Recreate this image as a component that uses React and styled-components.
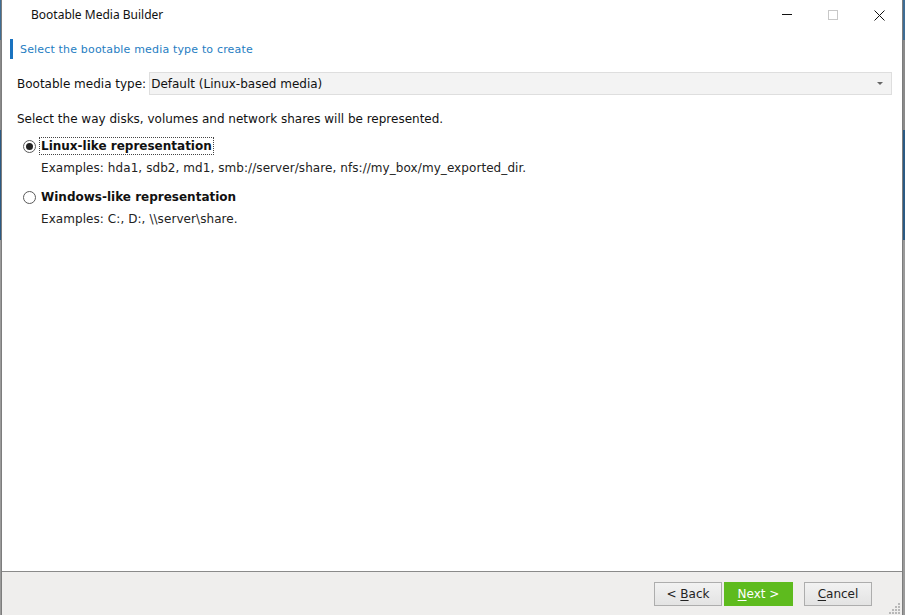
import styled, { createGlobalStyle } from "styled-components";

const Global = createGlobalStyle`
  html, body { margin: 0; padding: 0; height: 100%; }
  body {
    background: #5b6c7c;
    font-family: "DejaVu Sans", sans-serif;
    overflow: hidden;
  }
  #root { height: 100%; }
`;

const Desktop = styled.div`
  height: 615px;
  width: 905px;
  display: flex;
  background: linear-gradient(#3f6d95 0 40px, #8a8a8a 40px 130px, #2b5a84 130px 240px, #9a9a9a 240px);
`;

const Window = styled.div`
  margin-left: 1px;
  width: 900px;
  height: 615px;
  display: flex;
  flex-direction: column;
  background: #fff;
  border-left: 1px solid #7d7d7d;
  border-right: 1px solid #7d7d7d;
`;

const TitleBar = styled.div`
  height: 30px;
  display: flex;
  align-items: center;
  padding-left: 29px;
  font-family: "Noto Sans", "Open Sans", sans-serif;
  font-size: 12px;
  color: #111;
`;

const Title = styled.div`
  flex: 1;
  padding-bottom: 1px;
`;

const Controls = styled.div`
  display: flex;
  height: 100%;
`;

const Ctrl = styled.div`
  width: 46px;
  height: 100%;
  display: flex;
  align-items: center;
  justify-content: center;
`;

const Body = styled.div`
  flex: 1;
  display: flex;
  flex-direction: column;
`;

const Section = styled.div`
  margin: 9px 0 0 8px;
  height: 20px;
  display: flex;
  align-items: center;
  border-left: 3px solid #1a73c0;
  padding-left: 7px;
  font-size: 11px;
  letter-spacing: 0.17px;
  color: #1f7dc2;
`;

const TypeRow = styled.div`
  margin: 13px 10px 0 15px;
  display: flex;
  align-items: center;
  gap: 3px;
  font-size: 12px;
  color: #111;
`;

const Combo = styled.div`
  flex: 1;
  height: 21px;
  display: flex;
  align-items: center;
  padding: 0 8px 0 1px;
  background: #f3f3f3;
  border: 1px solid #dedede;
  font-size: 12px;
`;

const ComboText = styled.span`
  flex: 1;
`;

const Caret = styled.span`
  width: 0;
  height: 0;
  border-left: 3px solid transparent;
  border-right: 3px solid transparent;
  border-top: 3px solid #666;
`;

const Hint = styled.div`
  margin: 17px 0 0 15px;
  font-size: 12px;
  color: #111;
`;

const Options = styled.div`
  margin: 11px 0 0 21px;
  display: flex;
  flex-direction: column;
  gap: 13px;
`;

const Option = styled.div`
  display: flex;
  flex-direction: column;
  gap: 6px;
`;

const OptionHead = styled.label`
  display: flex;
  align-items: center;
  gap: 3px;
  font-size: 12px;
  font-weight: bold;
  color: #111;
`;

const Radio = styled.span`
  width: 11px;
  height: 11px;
  border-radius: 50%;
  border: 1px solid #5a5a5a;
  background: #fff;
  display: flex;
  align-items: center;
  justify-content: center;
  &::after {
    content: "";
    width: 7px;
    height: 7px;
    border-radius: 50%;
    background: ${(p) => (p.$on ? "#222" : "transparent")};
  }
`;

const OptionLabel = styled.span`
  padding: 1px 1px;
  border: 1px dotted ${(p) => (p.$focus ? "#444" : "transparent")};
`;

const Example = styled.div`
  padding-left: 18px;
  font-size: 12px;
  letter-spacing: 0.07px;
  color: #222;
`;

const Footer = styled.div`
  height: 43px;
  border-top: 1px solid #8a8a8a;
  background: #efeeed;
  display: flex;
  align-items: center;
  justify-content: flex-end;
  padding: 0 30px 0 0;
  position: relative;
`;

const Btn = styled.button`
  width: ${(p) => p.$w || 68}px;
  height: 24px;
  margin-left: ${(p) => p.$gap || 0}px;
  font-family: "DejaVu Sans", sans-serif;
  font-size: 12px;
  color: ${(p) => (p.$primary ? "#fff" : "#222")};
  background: ${(p) => (p.$primary ? "#5ebb1e" : "linear-gradient(#f2f2f2, #e3e3e3)")};
  border: 1px solid ${(p) => (p.$primary ? "#5ebb1e" : "#adadad")};
  padding: 0;
  u { text-underline-offset: 2px; }
`;

const Grip = styled.svg`
  position: absolute;
  right: 1px;
  bottom: 1px;
`;

export default function App() {
  return (
    <>
      <Global />
      <Desktop>
        <Window>
          <TitleBar>
            <Title>Bootable Media Builder</Title>
            <Controls>
              <Ctrl>
                <svg width="11" height="2"><rect width="10" height="1" fill="#111" /></svg>
              </Ctrl>
              <Ctrl>
                <svg width="11" height="11"><rect x="0.5" y="0.5" width="9" height="9" fill="none" stroke="#c8c8c8" /></svg>
              </Ctrl>
              <Ctrl>
                <svg width="11" height="11"><path d="M0.5 0.5 L10.5 10.5 M10.5 0.5 L0.5 10.5" stroke="#111" /></svg>
              </Ctrl>
            </Controls>
          </TitleBar>
          <Body>
            <Section>Select the bootable media type to create</Section>
            <TypeRow>
              <span>Bootable media type:</span>
              <Combo>
                <ComboText>Default (Linux-based media)</ComboText>
                <Caret />
              </Combo>
            </TypeRow>
            <Hint>Select the way disks, volumes and network shares will be represented.</Hint>
            <Options>
              <Option>
                <OptionHead>
                  <Radio $on />
                  <OptionLabel $focus>Linux-like representation</OptionLabel>
                </OptionHead>
                <Example>Examples: hda1, sdb2, md1, smb://server/share, nfs://my_box/my_exported_dir.</Example>
              </Option>
              <Option>
                <OptionHead>
                  <Radio />
                  <OptionLabel>Windows-like representation</OptionLabel>
                </OptionHead>
                <Example>Examples: C:, D:, \\server\share.</Example>
              </Option>
            </Options>
          </Body>
          <Footer>
            <Btn>&lt; <u>B</u>ack</Btn>
            <Btn $primary $gap={2} $w={69}><u>N</u>ext &gt;</Btn>
            <Btn $gap={11}><u>C</u>ancel</Btn>
            <Grip width="12" height="12">
              {[[9, 1], [6, 4], [9, 4], [3, 7], [6, 7], [9, 7], [0, 10], [3, 10], [6, 10], [9, 10]].map(([x, y]) => (
                <rect key={`${x}-${y}`} x={x} y={y} width="2" height="2" fill="#b8b8b8" />
              ))}
            </Grip>
          </Footer>
        </Window>
      </Desktop>
    </>
  );
}
